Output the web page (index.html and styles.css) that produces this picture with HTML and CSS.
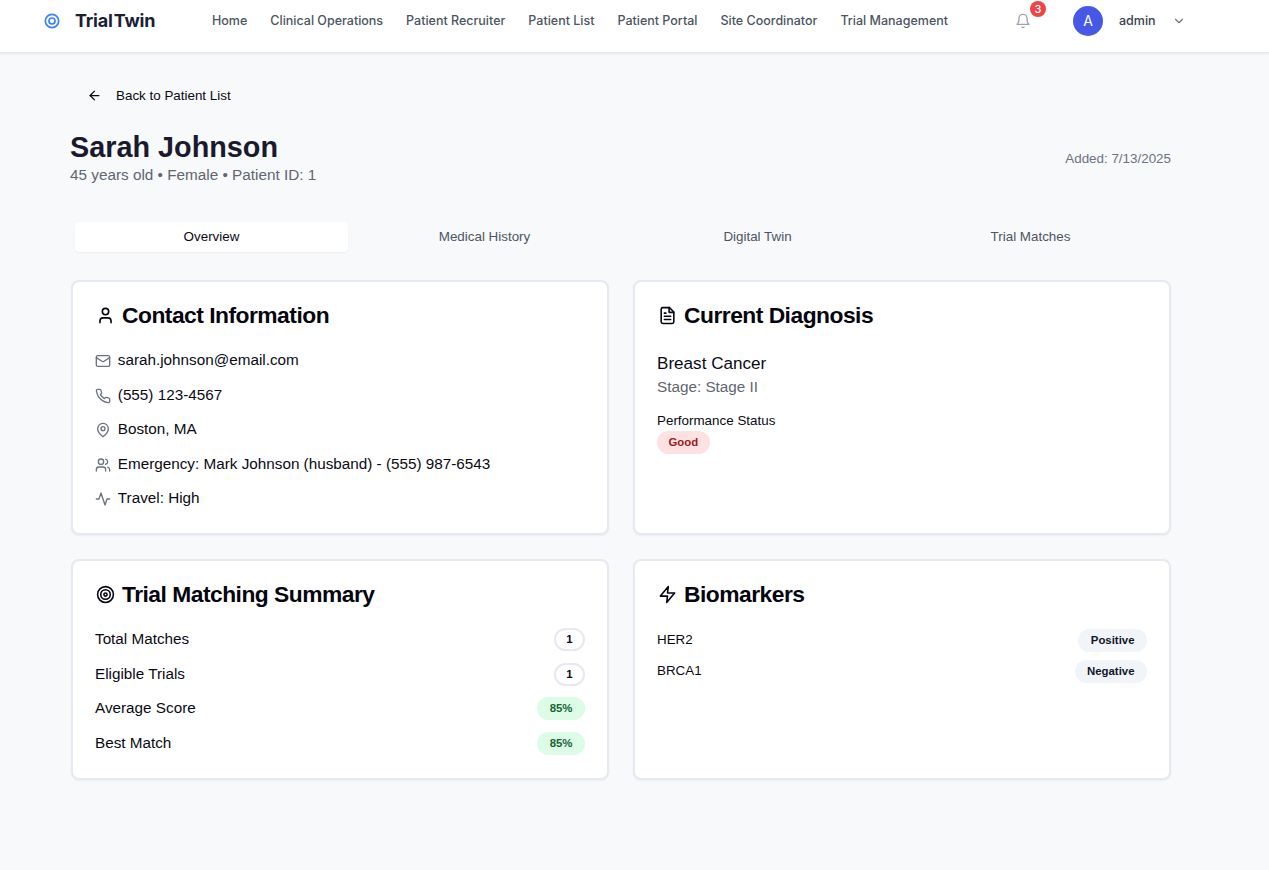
FILE: index.html
```html
<!DOCTYPE html>
<html lang="en">
<head>
  <meta charset="UTF-8" />
  <title>Sarah Johnson - TrialTwin</title>
  <link rel="stylesheet" href="styles.css">
</head>
<body>
  <header class="topbar">
    <div class="brand">
      <svg class="brand-icon" viewBox="0 0 24 24"><circle cx="12" cy="12" r="10"/><circle cx="12" cy="12" r="4.5"/></svg>
      <span class="brand-name">Trial Twin</span>
    </div>
    <nav class="mainnav">
      <a href="#">Home</a>
      <a href="#">Clinical Operations</a>
      <a href="#">Patient Recruiter</a>
      <a href="#">Patient List</a>
      <a href="#">Patient Portal</a>
      <a href="#">Site Coordinator</a>
      <a href="#">Trial Management</a>
    </nav>
    <div class="bell">
      <svg class="icon" viewBox="0 0 24 24"><path d="M6 8a6 6 0 0 1 12 0c0 7 3 9 3 9H3s3-2 3-9"/><path d="M10.3 21a1.94 1.94 0 0 0 3.4 0"/></svg>
      <span class="bell-count">3</span>
    </div>
    <div class="user">
      <span class="avatar">A</span>
      <span class="user-name">admin</span>
      <svg class="icon chevron" viewBox="0 0 24 24"><path d="m6 9 6 6 6-6"/></svg>
    </div>
  </header>

  <main class="page">
    <a class="back" href="#">
      <svg class="icon" viewBox="0 0 24 24"><path d="m12 19-7-7 7-7"/><path d="M19 12H5"/></svg>
      Back to Patient List
    </a>

    <div class="patient-head">
      <div>
        <h1>Sarah Johnson</h1>
        <p class="patient-meta">45 years old • Female • Patient ID: 1</p>
      </div>
      <p class="added">Added: 7/13/2025</p>
    </div>

    <div class="tabs">
      <button class="tab active">Overview</button>
      <button class="tab">Medical History</button>
      <button class="tab">Digital Twin</button>
      <button class="tab">Trial Matches</button>
    </div>

    <div class="cards">
      <section class="card">
        <h2><svg class="icon" viewBox="0 0 24 24"><path d="M19 21v-2a4 4 0 0 0-4-4H9a4 4 0 0 0-4 4v2"/><circle cx="12" cy="7" r="4"/></svg>Contact Information</h2>
        <ul class="rows">
          <li class="contact"><svg class="icon" viewBox="0 0 24 24"><rect x="2" y="4" width="20" height="16" rx="2"/><path d="m22 7-8.97 5.7a1.94 1.94 0 0 1-2.06 0L2 7"/></svg>sarah.johnson@email.com</li>
          <li class="contact"><svg class="icon" viewBox="0 0 24 24"><path d="M22 16.92v3a2 2 0 0 1-2.18 2 19.79 19.79 0 0 1-8.63-3.07 19.5 19.5 0 0 1-6-6 19.79 19.79 0 0 1-3.07-8.67A2 2 0 0 1 4.11 2h3a2 2 0 0 1 2 1.72c.13.96.36 1.9.7 2.81a2 2 0 0 1-.45 2.11L8.09 9.91a16 16 0 0 0 6 6l1.27-1.27a2 2 0 0 1 2.11-.45c.91.34 1.85.57 2.81.7A2 2 0 0 1 22 16.92z"/></svg>(555) 123-4567</li>
          <li class="contact"><svg class="icon" viewBox="0 0 24 24"><path d="M20 10c0 6-8 12-8 12s-8-6-8-12a8 8 0 0 1 16 0Z"/><circle cx="12" cy="10" r="3"/></svg>Boston, MA</li>
          <li class="contact"><svg class="icon" viewBox="0 0 24 24"><path d="M16 21v-2a4 4 0 0 0-4-4H6a4 4 0 0 0-4 4v2"/><circle cx="9" cy="7" r="4"/><path d="M22 21v-2a4 4 0 0 0-3-3.87"/><path d="M16 3.13a4 4 0 0 1 0 7.75"/></svg>Emergency: Mark Johnson (husband) - (555) 987-6543</li>
          <li class="contact"><svg class="icon" viewBox="0 0 24 24"><path d="M22 12h-4l-3 9L9 3l-3 9H2"/></svg>Travel: High</li>
        </ul>
      </section>

      <section class="card">
        <h2><svg class="icon" viewBox="0 0 24 24"><path d="M14.5 2H6a2 2 0 0 0-2 2v16a2 2 0 0 0 2 2h12a2 2 0 0 0 2-2V7.5L14.5 2z"/><path d="M14 2v6h6"/><path d="M16 13H8"/><path d="M16 17H8"/><path d="M10 9H8"/></svg>Current Diagnosis</h2>
        <p class="diagnosis">Breast Cancer</p>
        <p class="stage">Stage: Stage II</p>
        <p class="perf-label">Performance Status</p>
        <span class="pill pill-red">Good</span>
      </section>

      <section class="card">
        <h2><svg class="icon" viewBox="0 0 24 24"><circle cx="12" cy="12" r="10"/><circle cx="12" cy="12" r="6"/><circle cx="12" cy="12" r="2"/></svg>Trial Matching Summary</h2>
        <ul class="rows">
          <li class="stat">Total Matches <span class="pill pill-outline">1</span></li>
          <li class="stat">Eligible Trials <span class="pill pill-outline">1</span></li>
          <li class="stat">Average Score <span class="pill pill-green">85%</span></li>
          <li class="stat">Best Match <span class="pill pill-green">85%</span></li>
        </ul>
      </section>

      <section class="card">
        <h2><svg class="icon" viewBox="0 0 24 24"><path d="M13 2 3 14h9l-1 8 10-12h-9l1-8z"/></svg>Biomarkers</h2>
        <ul class="rows rows-tight">
          <li class="marker">HER2 <span class="pill pill-grey">Positive</span></li>
          <li class="marker">BRCA1 <span class="pill pill-grey">Negative</span></li>
        </ul>
      </section>
    </div>
  </main>
</body>
</html>
```

FILE: styles.css
```css
* {
  box-sizing: border-box;
}
body {
  margin: 0;
  min-height: 870px;
  font-family: "Liberation Sans", sans-serif;
  background-color: #f8f9fb;
  color: #0a0a14;
}
h1, h2, p, ul {
  margin: 0;
  padding: 0;
}
ul {
  list-style: none;
}
.icon {
  display: block;
  width: 16px;
  height: 16px;
  flex: none;
  fill: none;
  stroke: currentColor;
  stroke-width: 2;
  stroke-linecap: round;
  stroke-linejoin: round;
}

/* top bar */
.topbar {
  display: flex;
  align-items: center;
  height: 53px;
  padding: 0 0 11px 44px;
  background: white;
  border-bottom: 1px solid #e6e8f0;
  box-shadow: 0 1px 2px rgba(20,30,60,0.08);
  font-family: "Inter", "Liberation Sans", sans-serif;
}
.brand {
  display: flex;
  align-items: center;
  gap: 15px;
  width: 168px;
}
.brand-icon {
  width: 16px;
  height: 16px;
  fill: none;
  stroke: #3b82f6;
  stroke-width: 2.6;
}
.brand-name {
  font-size: 18px;
  font-weight: 700;
  color: #1a1f36;
  letter-spacing: -0.2px;
  word-spacing: -3px;
}
.mainnav {
  display: flex;
  gap: 23px;
  width: 803px;
}
.mainnav a {
  font-size: 12.5px;
  font-weight: 500;
  color: #4b5563;
  text-decoration: none;
  white-space: nowrap;
}
.bell {
  position: relative;
  color: #9ca3af;
  margin-right: 42px;
}
.bell-count {
  position: absolute;
  top: -12px;
  left: 15px;
  width: 16px;
  height: 16px;
  border-radius: 50%;
  background: #ef4444;
  color: white;
  font-size: 11px;
  font-weight: 500;
  line-height: 16px;
  text-align: center;
}
.user {
  display: flex;
  align-items: center;
}
.avatar {
  width: 30px;
  height: 30px;
  border-radius: 50%;
  background: #4659e6;
  color: white;
  font-size: 14px;
  line-height: 30px;
  text-align: center;
}
.user-name {
  margin-left: 16px;
  font-size: 12.5px;
  font-weight: 500;
  color: #374151;
}
.chevron {
  margin-left: 16px;
  width: 14px;
  height: 14px;
  stroke-width: 2;
  color: #6b7280;
}

/* page */
.page {
  padding: 0 98px 0 71px;
}
.back {
  display: flex;
  align-items: center;
  gap: 14px;
  margin: 33px 0 0 16px;
  height: 18px;
  font-size: 13.4px;
  color: #0a0a14;
  text-decoration: none;
}
.back .icon {
  width: 15px;
  height: 15px;
}
.patient-head {
  display: flex;
  justify-content: space-between;
  align-items: center;
  margin: 25px 0 0 -1px;
}
h1 {
  font-size: 28.8px;
  font-weight: 700;
  line-height: 36px;
  color: #1a1a2e;
}
.patient-meta {
  font-size: 15.3px;
  line-height: 20px;
  color: #5f6672;
}
.added {
  margin-top: 2px;
  font-size: 13.4px;
  color: #6b7280;
}

.tabs {
  display: grid;
  grid-template-columns: repeat(4, 1fr);
  margin-top: 33px;
  padding: 4px;
  height: 38px;
}
.tab {
  border: none;
  background: none;
  padding: 0 0 2px;
  font-family: inherit;
  font-size: 13.4px;
  color: #4b5563;
  border-radius: 4px;
}
.tab.active {
  background: white;
  color: #0a0a14;
  box-shadow: 0 1px 2px rgba(0,0,0,0.05);
}

.cards {
  display: grid;
  grid-template-columns: 1fr 1fr;
  grid-template-rows: 255px 221px;
  gap: 24px;
  margin-top: 24px;
}
.card {
  padding: 19px 22px;
  background: white;
  border: 2px solid #e6e8f2;
  border-radius: 8px;
  box-shadow: 0 1px 2px rgba(0,0,0,0.05);
}
h2 {
  display: flex;
  align-items: center;
  gap: 7px;
  font-size: 22.8px;
  font-weight: 700;
  line-height: 28px;
  letter-spacing: -0.5px;
  color: #050510;
}
h2 .icon {
  width: 19px;
  height: 19px;
  margin-left: 1px;
}
.rows {
  margin-top: 13.4px;
}
.contact {
  display: flex;
  align-items: center;
  gap: 6.8px;
  height: 34.5px;
  font-size: 15.28px;
}
.contact .icon {
  color: #6b7280;
  margin-top: 3px;
}
.stat, .marker {
  display: flex;
  justify-content: space-between;
  align-items: center;
  height: 34.5px;
  font-size: 15.28px;
}
.marker {
  height: 31px;
  font-size: 13.4px;
}
.stat .pill, .marker .pill {
  margin-top: 2px;
}
.rows-tight {
  margin-top: 15.5px;
}
.diagnosis {
  margin-top: 23px;
  font-size: 17.1px;
  line-height: 24px;
}
.stage {
  font-size: 15.28px;
  line-height: 22px;
  color: #5f6672;
}
.perf-label {
  margin-top: 13px;
  font-size: 13.4px;
  line-height: 20px;
}
.pill {
  display: inline-block;
  height: 23px;
  padding: 0 12.5px;
  border-radius: 12px;
  font-size: 11.4px;
  font-weight: 700;
  line-height: 23px;
}
.pill-red {
  display: block;
  width: fit-content;
  padding: 0 11.4px;
  background: #fee2e2;
  color: #991b1b;
}
.pill-outline {
  background: white;
  border: 2px solid #e6e8f2;
  line-height: 19px;
  padding: 0 10.4px;
}
.pill-green {
  background: #dcfce7;
  color: #166534;
}
.pill-grey {
  background: #f1f5f9;
  color: #0f172a;
}
```
